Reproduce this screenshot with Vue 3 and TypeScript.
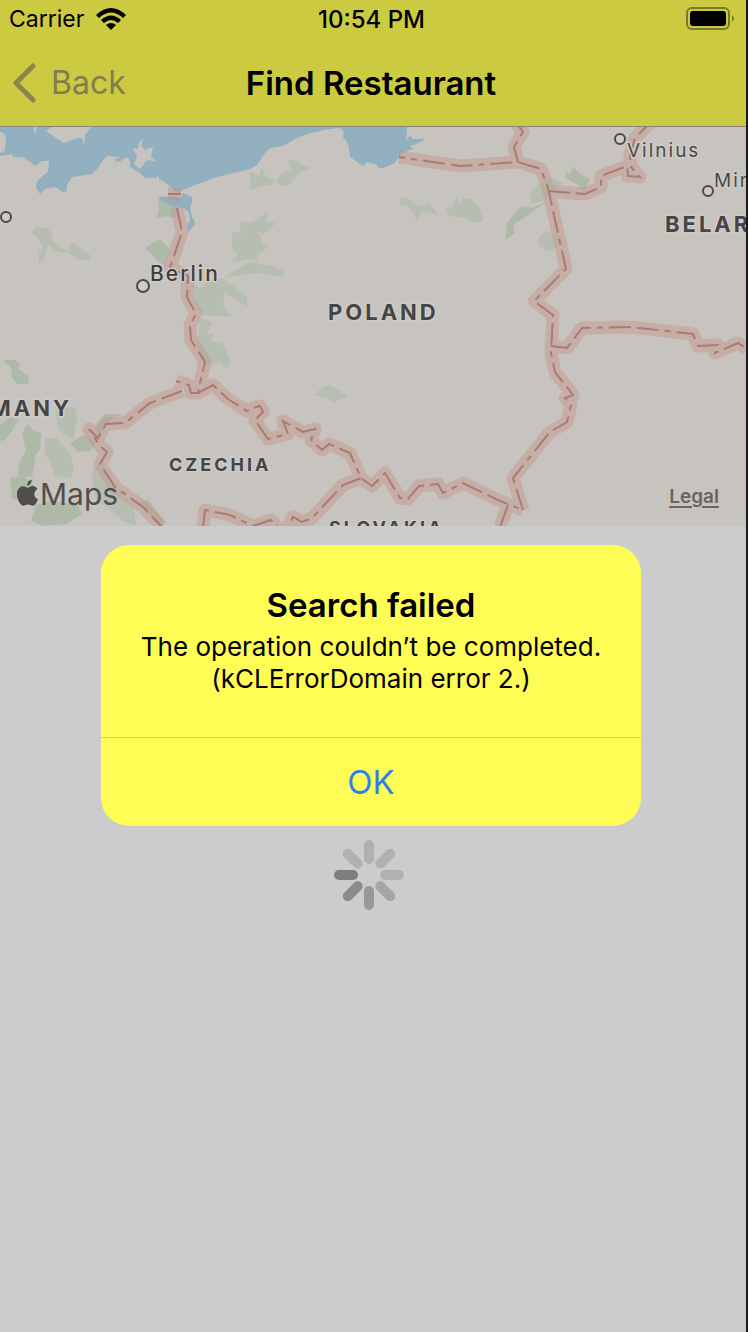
<script setup lang="ts">
import { ref } from 'vue'

interface Place { name: string; x: number; y: number; kind: 'country' | 'country small' | 'city' | 'city soft' }

const alertOpen = ref(true)

const water =
  'M0 126V156L12 154L13 157L22 157L32 163L35 166L42 161L49 161L48 172L45 174L37 181L36 187L40 194L45 189L55 187L60 190L64 193L67 190L67 185L72 177L92 174L98 168L103 160L107 156L121 157L115 159L116 162L121 161L126 157L130 160L130 167L140 173L145 178L157 178L158 175L160 182L160 179L167 184L177 193L187 188L217 177L250 169L257 165L265 153L270 148L283 146L297 138L310 133L330 129L340 128L344 132L343 137L347 142L349 148L350 157L363 166L367 162L377 165L378 168L383 168L395 163L400 155L407 151L413 149L410 146L416 144L426 139L413 139L410 135L406 141L407 126Z'
const lagoon =
  'M158 197L170 196L181 198L183 193L192 197L192 203L190 207L192 217L195 222L194 226L188 232L187 226L190 220L189 213L184 208L175 207L163 202Z'
const islands = [
  'M0 132L4 133L6 139L5 150L3 152L0 153Z',
  'M46 131L53 126L92 126L85 135L84 145L82 138L78 138L72 140L64 143L56 138Z',
  'M33 126L37 126L35 135Z',
  'M133 148L138 149L139 142L143 139L141 146L145 150L153 147L151 156L156 162L149 160L146 161L140 169L134 164L137 157Z'
]

const woods = [
  'M31 232L36 227L48 228L52 236L52 241L62 248L67 251L72 243L81 248L90 255L90 260L79 260L67 252L60 253L47 245L44 262L39 263L39 252L44 248L36 236Z',
  'M250 171L258 176L262 167L266 177L274 180L273 184L262 186L250 190Z',
  'M276 180L283 173L291 169L287 160L300 161L298 164L312 168L300 172L290 185L280 186Z',
  'M232 233L240 232L242 236L239 221L252 223L267 212L266 222L276 223L263 235L258 231L263 243L268 247L258 255L257 260L248 259L230 263L238 255L232 248Z',
  'M225 277L236 270L250 262L272 266L285 272L282 277L257 273Z',
  'M192 283L200 288L207 282L222 278L235 287L247 297L247 307L225 293L223 305L233 317L203 315L196 305Z',
  'M200 318L212 322L207 333L214 334L211 342L222 343L230 360L227 370L221 363L207 365L197 347Z',
  'M399 207L401 197L411 200L417 206L429 203L439 215L422 211L417 221L410 208L402 205Z',
  'M446 207L453 207L456 197L459 205L463 198L471 199L480 209L483 221L476 223L465 218L449 216Z',
  'M314 395L324 386L330 385L348 396L334 402L328 398Z',
  'M530 192L542 182L553 178L563 183L553 190L543 201L532 203Z',
  'M538 239L546 231L562 238L556 248L549 252L539 246Z',
  'M56 409L76 407L77 420L73 440L58 430Z',
  'M46 438L56 438L70 453L74 467L71 479L55 475L49 461L44 452Z',
  'M91 474L102 459L116 487L133 506L136 526L125 522L108 508L96 500Z'
]
const forests = [
  'M158 198L177 207L179 219L166 216L157 218L159 208Z',
  'M145 248L153 243L160 239L170 249L165 266L156 260L150 252Z',
  'M3 360L16 360L20 364L18 369L29 376L28 384L17 384L11 376L12 369Z',
  'M0 425L10 417L18 420L12 431L5 440L0 441Z',
  'M22 433L28 424L34 431L41 433L40 450L36 454L32 477L18 476L20 460L26 451Z',
  'M10 478L24 476L34 486L26 500L12 499Z',
  'M36 505L52 501L78 505L82 514L66 524L43 526L31 520Z',
  'M70 443L85 434L95 443L90 451L77 452Z',
  'M95 425L105 414L123 414L110 420L104 430L98 435Z',
  'M565 171L570 174L573 166L580 174L590 179L586 187L585 192L578 185L566 178Z',
  'M507 223L521 206L532 208L548 201L538 208L513 225L515 233L505 240Z',
  'M138 503L148 499L164 521L160 526L145 511Z'
]
const borders = [
  'M168 194L181 194',
  'M177 208L182 232L170 268L188 276L187 297L196 314L190 325L191 340L205 362L200 383L198 393L191 393L189 385L176 381',
  'M182 391L150 403L125 423L106 424L98 438L89 429L100 446L107 452L100 464L115 487L143 507L162 527',
  'M198 393L213 385L228 399L247 411L252 408L260 406L263 412L255 420L268 439L288 434L283 421L303 432L315 429L311 440L322 450L329 444L350 453L361 478L372 486L385 473L400 498L408 499L419 486L438 484L443 493L463 483L500 501L523 510',
  'M361 478L343 485L312 518L302 522L293 517L287 529',
  'M203 528L205 510L230 515L253 526L271 520L280 529',
  'M523 510L513 478L550 432L567 422L571 405L565 398L573 395L555 372L551 353L553 315L534 301L566 269L548 188L541 169L518 162L460 166L399 157',
  'M518 162L514 147L523 132L517 124',
  'M548 191L585 194L601 187L601 176L627 166L628 176L640 177L631 167L630 155L635 138L650 123',
  'M551 346L567 348L582 328L631 327L693 334L698 346L718 345L715 353L738 343L747 349',
  'M508 505L500 527'
]
const places: Place[] = [
  { name: 'POLAND', x: 328, y: 320, kind: 'country' },
  { name: 'BELARUS', x: 665, y: 232, kind: 'country' },
  { name: 'GERMANY', x: -63, y: 416, kind: 'country' },
  { name: 'CZECHIA', x: 169, y: 471, kind: 'country small' },
  { name: 'SLOVAKIA', x: 329, y: 534, kind: 'country small' },
  { name: 'Berlin', x: 150, y: 281, kind: 'city' },
  { name: 'Vilnius', x: 627, y: 157, kind: 'city soft' },
  { name: 'Minsk', x: 714, y: 187, kind: 'city soft' }
]
const pins = [
  { x: 143, y: 286, r: 6 },
  { x: 6, y: 217, r: 5 },
  { x: 620, y: 139, r: 5 },
  { x: 708, y: 191, r: 5 }
]
const spokes = ['#b1b1b1', '#b1b1b1', '#b1b1b1', '#a5a5a5', '#98989a', '#8b8b8d', '#7e7e80', '#b1b1b1']
</script>

<template>
  <div class="screen">
    <header class="top">
      <div class="status">
        <div class="carrier">
          <span>Carrier</span>
          <svg class="wifi" viewBox="0 0 30 22" aria-hidden="true">
            <path d="M0 7Q15-7 30 7L27 10Q15-1 3 10Z" />
            <path d="M5 12Q15 3 25 12L22 15Q15 9 8 15Z" />
            <path d="M10 17Q15 13 20 17L15 22Z" />
          </svg>
        </div>
        <time>10:54 PM</time>
        <svg class="battery" viewBox="0 0 48 23" aria-label="Battery full">
          <rect x="1" y="1" width="42" height="21" rx="5" fill="none" stroke="#7b7927" stroke-width="2" />
          <rect x="4" y="4" width="36" height="15" rx="3" />
          <path d="M46 8Q50 11.500 46 15Z" fill="#7b7927" />
        </svg>
      </div>
      <nav class="nav">
        <button class="back" type="button">
          <svg viewBox="0 0 24 40" aria-hidden="true"><path d="M20 3L3 20L20 37" /></svg>
          <span>Back</span>
        </button>
        <h1>Find Restaurant</h1>
      </nav>
    </header>

    <section class="map" aria-label="Map">
      <svg class="chart" viewBox="0 127 746 399" preserveAspectRatio="xMinYMin slice">
        <path v-for="d in woods" :key="d" class="wood" :d="d" />
        <path v-for="d in forests" :key="d" class="forest" :d="d" />
        <path class="water" :d="water" />
        <path class="water" :d="lagoon" />
        <path v-for="d in islands" :key="d" class="land" :d="d" />
        <g class="halo"><path v-for="d in borders" :key="d" :d="d" /></g>
        <path v-for="d in borders" :key="d" class="border" :d="d" />
        <circle v-for="p in pins" :key="p.x" class="pin" :cx="p.x" :cy="p.y" :r="p.r" />
        <text v-for="p in places" :key="p.name" :class="p.kind" :x="p.x" :y="p.y">{{ p.name }}</text>
      </svg>
      <div class="credits">
        <span class="brand">
          <svg viewBox="0 0 20 25" aria-hidden="true">
            <path d="M14 0Q14 5 9.500 6Q9.500 1.500 14 0Z" />
            <path d="M10 8C12 8 13 6 16 6.500Q18.500 7 19.500 9Q16.500 11 16.500 14Q16.500 17.500 20 19Q18 25 15 25C13 25 12.500 24 10.500 24C8.500 24 8 25 6 25C3 25 0 19 0 14.500C0 9.500 2.500 6.500 6 6.500C8 6.500 9 8 10 8Z" />
          </svg>
          <span>Maps</span>
        </span>
        <a class="legal" href="#legal">Legal</a>
      </div>
    </section>

    <main class="results">
      <svg class="spinner" viewBox="0 0 70 70" role="img" aria-label="Loading">
        <rect v-for="(c, i) in spokes" :key="i" x="30" y="0" width="10" height="24" rx="5" :fill="c" :transform="`rotate(${i * 45} 35 35)`" />
      </svg>
    </main>

    <div v-if="alertOpen" class="overlay">
      <section class="alert" role="alertdialog" aria-labelledby="alert-title" aria-describedby="alert-text">
        <div class="message">
          <h2 id="alert-title">Search failed</h2>
          <p id="alert-text">The operation couldn’t be completed. (kCLErrorDomain error 2.)</p>
        </div>
        <button class="ok" type="button" @click="alertOpen = false">OK</button>
      </section>
    </div>
  </div>
</template>

<style>
body { margin: 0; background: #cccccc; }
</style>

<style scoped>
.screen {
  position: relative;
  box-sizing: border-box;
  display: flex;
  flex-direction: column;
  min-height: 100vh;
  border-right: 2px solid #1b1b1b;
  background: #cccccc;
  color: #000;
  font-family: Inter, "Liberation Sans", sans-serif;
  overflow: hidden;
}
.top { background: #ccca41; border-bottom: 1px solid #85857a; }
.status {
  display: grid;
  grid-template-columns: 1fr auto 1fr;
  align-items: center;
  height: 38px;
  padding: 0 12px 0 9px;
  font-size: 23px;
}
.carrier { display: flex; align-items: center; gap: 12px; }
.wifi { width: 30px; height: 22px; }
.status time { font-size: 24px; font-weight: 500; }
.battery { width: 48px; height: 23px; justify-self: end; margin-bottom: 2px; }
.nav {
  display: grid;
  grid-template-columns: 1fr auto 1fr;
  align-items: center;
  height: 86px;
  padding: 2px 17px 0 13px;
}
.back {
  display: flex;
  align-items: center;
  justify-self: start;
  gap: 14px;
  padding: 0;
  border: 0;
  background: none;
  color: #7f7e4f;
  font: 400 32px/40px Inter, "Liberation Sans", sans-serif;
}
.back svg { width: 24px; height: 40px; fill: none; stroke: #89874a; stroke-width: 5; stroke-linecap: round; stroke-linejoin: round; }
h1, h2, p { margin: 0; }
h1 { font-size: 33px; font-weight: 600; line-height: 40px; }

.map { position: relative; height: 399px; background: #c7c3be; overflow: hidden; }
.chart { display: block; width: 100%; height: 100%; }
.water { fill: #92b0c0; }
.land { fill: #c7c3be; }
.wood { fill: #b6beb2; }
.forest { fill: #afb9a8; }
.halo { fill: none; stroke: #c58f87; stroke-width: 13; stroke-linejoin: round; opacity: 0.4; }
.border { fill: none; stroke: #a87c72; stroke-width: 2; stroke-dasharray: 22 6 22 6 6 6; }
.pin { fill: #cccccc; stroke: #4b4a46; stroke-width: 2; }
text { paint-order: stroke; stroke: #cfccc8; stroke-width: 3; stroke-linejoin: round; fill: #454545; }
.country { font-size: 22px; font-weight: 700; letter-spacing: 3px; }
.small { font-size: 18px; }
.city { font-size: 21px; font-weight: 500; letter-spacing: 2px; fill: #3d3c3a; }
.soft { font-size: 19px; font-weight: 400; fill: #4a4a49; }
.credits {
  position: absolute;
  inset: auto 27px 12px 17px;
  display: flex;
  align-items: flex-end;
  justify-content: space-between;
}
.brand { display: flex; align-items: center; gap: 2px; color: #4f4e4c; font-size: 30px; line-height: 40px; }
.brand svg { width: 21px; height: 27px; margin-bottom: 3px; fill: #4f4e4c; }
.legal { padding-bottom: 5px; color: #676562; font-size: 19px; font-weight: 600; line-height: 24px; text-underline-offset: 3px; text-decoration-thickness: 2px; }

.results { flex: 1; display: flex; justify-content: center; align-items: flex-start; padding: 314px 8px 0 0; }
.spinner { width: 70px; height: 70px; }

.overlay {
  position: absolute;
  inset: 0;
  display: flex;
  align-items: center;
  justify-content: center;
  padding: 38px 4px 0 0;
}
.alert { width: 540px; max-width: 90%; border-radius: 28px; background: #fffc56; overflow: hidden; text-align: center; }
.message { padding: 38px 32px 42px; }
h2 { font-size: 33px; font-weight: 600; line-height: 44px; }
p { margin-top: 4px; font-size: 26px; line-height: 32px; }
.ok {
  display: block;
  width: 100%;
  height: 89px;
  padding: 0;
  border: 0;
  border-top: 1px solid #dbd84c;
  background: none;
  color: #2d7ff0;
  font: 400 33px/40px Inter, "Liberation Sans", sans-serif;
}
</style>
